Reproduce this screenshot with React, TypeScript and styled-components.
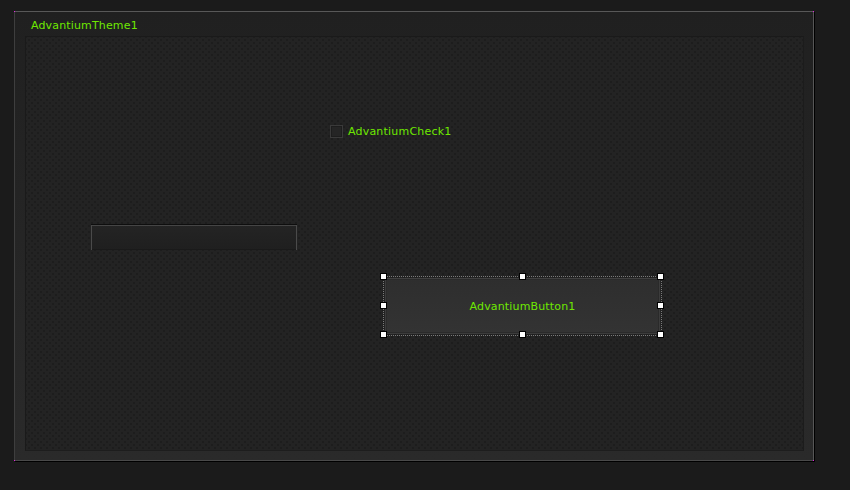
import React from "react";
import styled, { createGlobalStyle } from "styled-components";

const Global = createGlobalStyle`
  html, body { margin: 0; padding: 0; background: #1b1b1b; }
  body { font-family: "DejaVu Sans", Verdana, sans-serif; }
`;

const Page = styled.div`
  width: 850px;
  height: 490px;
  background: #1b1b1b;
  padding: 11px 0 0 14px;
  box-sizing: border-box;
`;

const Frame = styled.div`
  position: relative;
  width: 800px;
  height: 450px;
  box-sizing: border-box;
  border-top: 1px solid #585858;
  border-left: 1px solid #3e3e3e;
  border-right: 1px solid #575757;
  border-bottom: 1px solid #4a4a4a;
  box-shadow: 1px 1px 0 #000;
  background: linear-gradient(#202020, #2a2a2a);
  display: flex;
  flex-direction: column;
  padding: 0 9px 9px 10px;
`;

const Corner = styled.span<{ $x: "l" | "r"; $y: "t" | "b" }>`
  position: absolute;
  width: 1px;
  height: 1px;
  background: #e020e0;
  ${(p) => (p.$x === "l" ? "left: -1px;" : "right: -1px;")}
  ${(p) => (p.$y === "t" ? "top: -1px;" : "bottom: -1px;")}
`;

const Title = styled.div`
  height: 24px;
  line-height: 28px;
  padding-left: 6px;
  font-size: 11px;
  letter-spacing: 0.15px;
  color: #6ee800;
  flex: none;
`;

const Canvas = styled.div`
  position: relative;
  flex: 1;
  box-sizing: border-box;
  border: 1px solid #1a1a1a;
  border-right-color: #1c1c1c;
  border-bottom-color: #1d1d1d;
  background-color: #232323;
  background-image: radial-gradient(circle, #1d1d1d 0.7px, transparent 0.9px),
    radial-gradient(circle, #1d1d1d 0.7px, transparent 0.9px);
  background-size: 6px 6px;
  background-position: 0 0, 3px 3px;
`;

const CheckRow = styled.div`
  position: absolute;
  left: 304px;
  top: 88px;
  display: flex;
  align-items: center;
  gap: 5px;
  font-size: 11px;
  letter-spacing: 0.2px;
  color: #6ee800;
`;

const CheckBox = styled.span`
  width: 11px;
  height: 11px;
  border: 1px solid #3a3a3a;
  background: #252525;
  box-shadow: inset 0 0 0 1px #1d1d1d;
`;

const TextBox = styled.div`
  position: absolute;
  left: 65px;
  top: 187px;
  width: 206px;
  height: 26px;
  box-sizing: border-box;
  border-top: 1px solid #0e0e0e;
  box-shadow: inset 1px 0 0 #4a4a4a, inset -1px 0 0 #4a4a4a, inset 0 1px 0 #454545,
    inset 0 -1px 0 #1a1a1a;
  background: linear-gradient(#242424, #1f1f1f);
`;

const Selection = styled.div`
  position: absolute;
  left: 357px;
  top: 239px;
  width: 279px;
  height: 60px;
  box-sizing: border-box;
  border: 1px dotted #7a7a7a;
  padding: 1px;
  display: flex;
`;

const Button = styled.div`
  flex: 1;
  box-sizing: border-box;
  border: 1px solid #3c3c3c;
  border-top-color: #404040;
  background: linear-gradient(#2e2e2e, #333);
  box-shadow: inset 0 0 0 1px #2a2a2a;
  display: flex;
  align-items: center;
  justify-content: center;
  font-size: 11px;
  letter-spacing: 0.15px;
  color: #6ee800;
`;

const Handle = styled.span<{ $l: number; $t: number }>`
  position: absolute;
  width: 5px;
  height: 5px;
  background: #fff;
  border: 1px solid #000;
  left: ${(p) => p.$l}px;
  top: ${(p) => p.$t}px;
`;

const handles: [number, number][] = [];
[0, 139, 277].forEach((x) => [0, 29, 58].forEach((y) => {
  if (!(x === 139 && y === 29)) handles.push([x, y]);
}));

export default function App() {
  return (
    <>
      <Global />
      <Page>
        <Frame>
          <Corner $x="l" $y="t" />
          <Corner $x="r" $y="t" />
          <Corner $x="l" $y="b" />
          <Corner $x="r" $y="b" />
          <Title>AdvantiumTheme1</Title>
          <Canvas>
            <CheckRow>
              <CheckBox />
              <span>AdvantiumCheck1</span>
            </CheckRow>
            <TextBox />
            <Selection>
              <Button>AdvantiumButton1</Button>
              {handles.map(([x, y]) => (
                <Handle key={`${x}-${y}`} $l={x - 4} $t={y - 4} />
              ))}
            </Selection>
          </Canvas>
        </Frame>
      </Page>
    </>
  );
}
